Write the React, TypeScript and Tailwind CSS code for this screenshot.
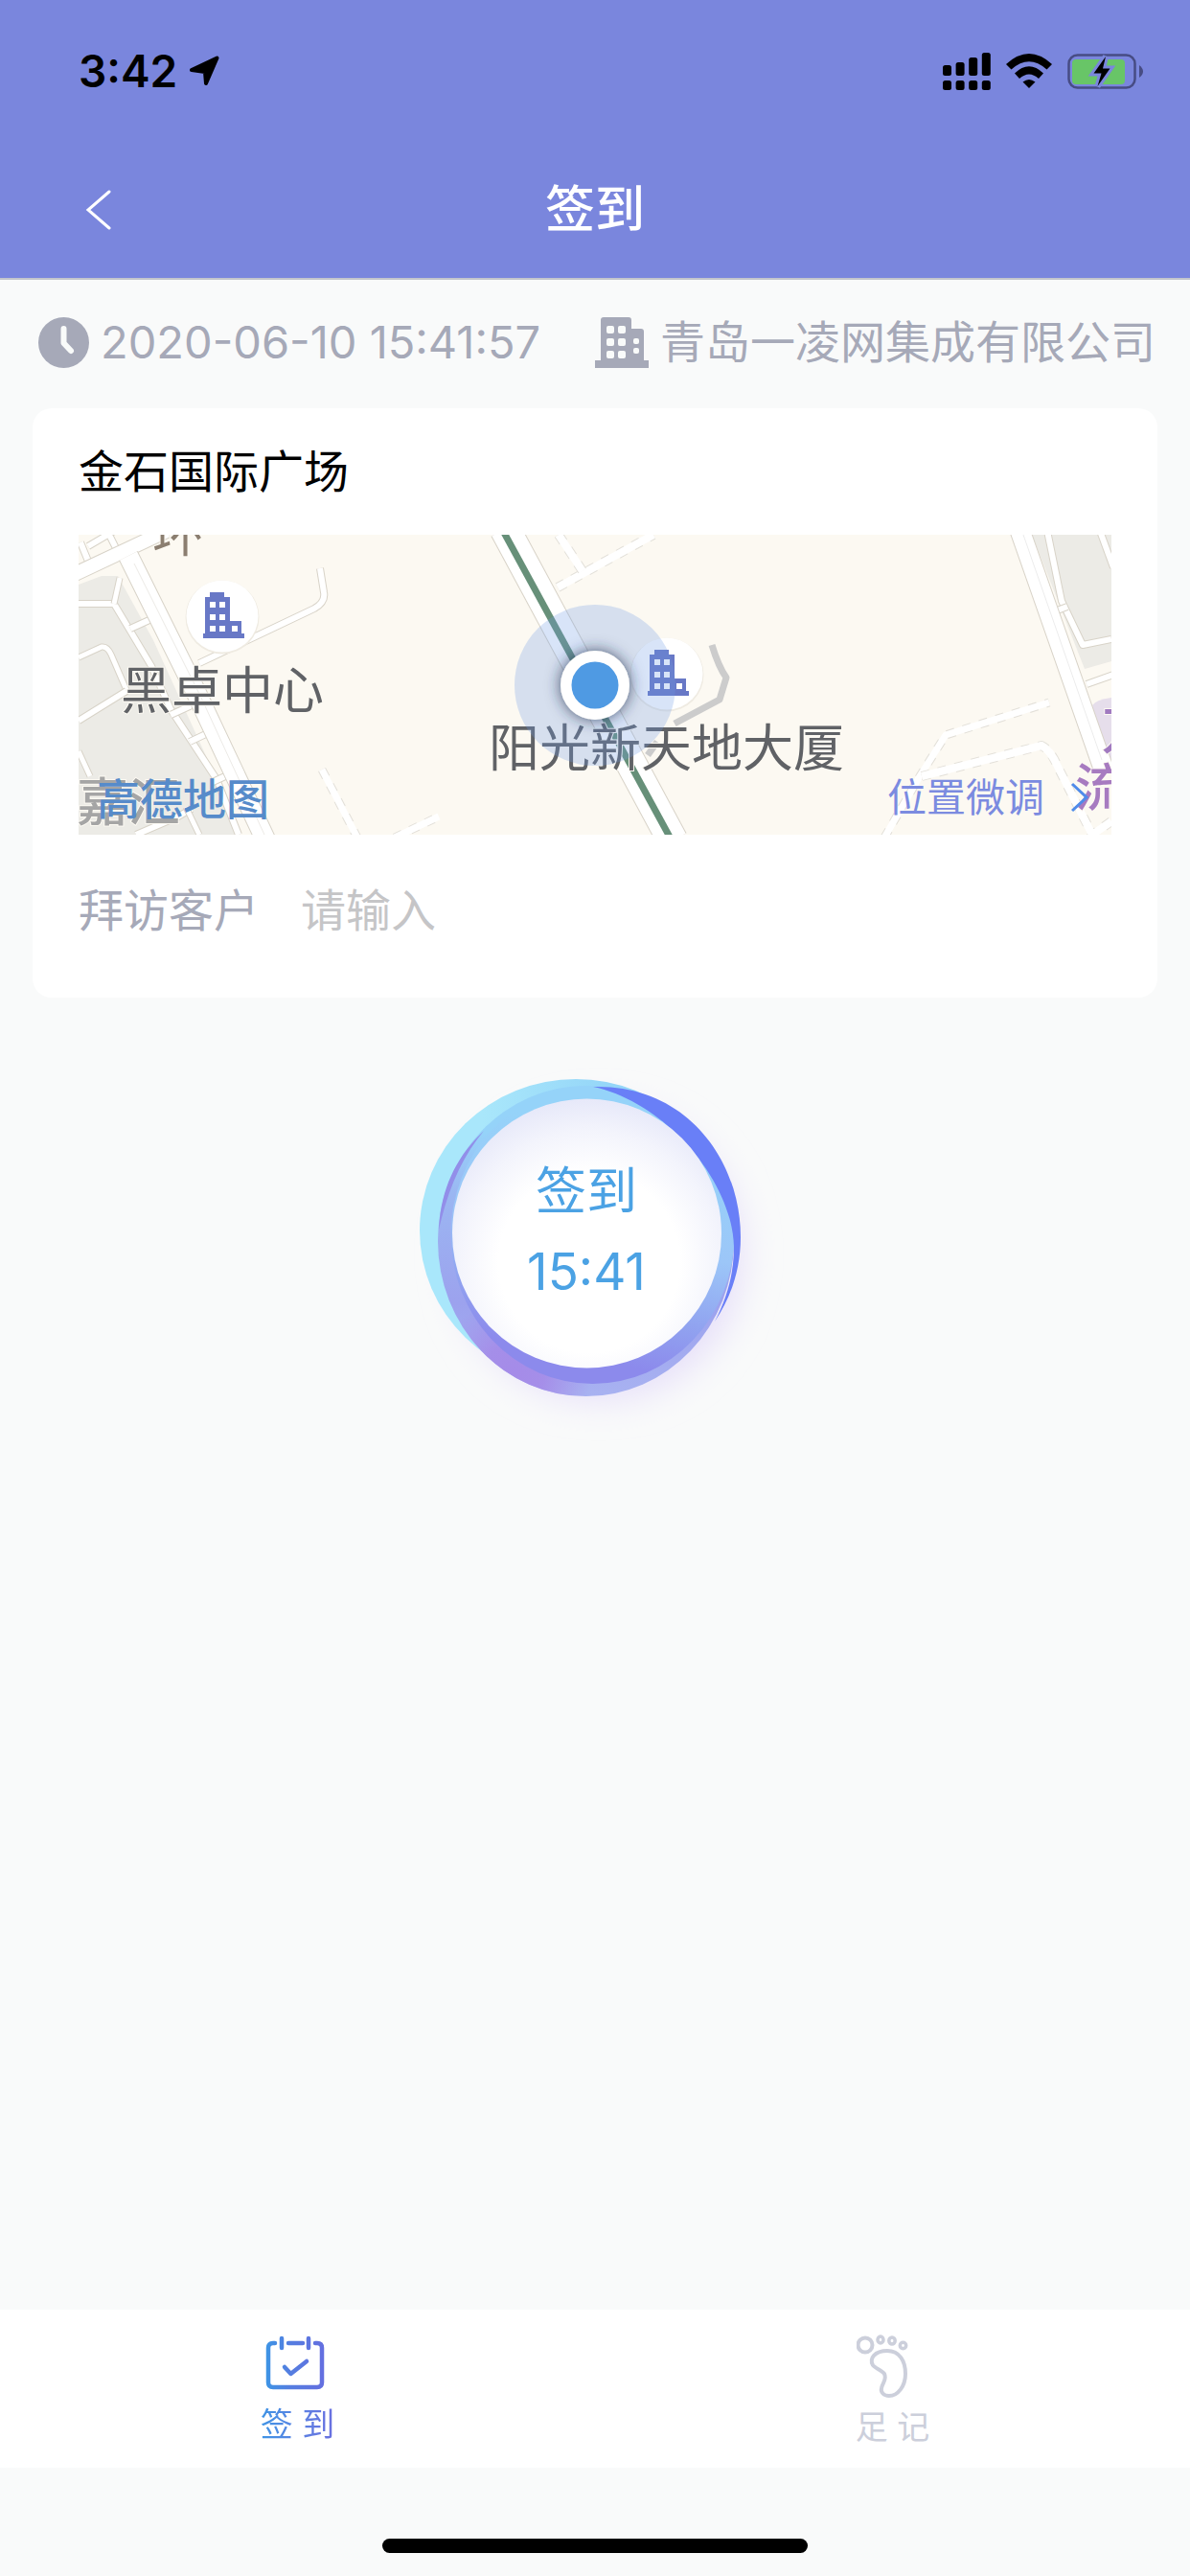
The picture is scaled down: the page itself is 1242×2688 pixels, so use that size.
import React, { useState } from 'react';

interface BuildingPinProps {
  x: number;
  y: number;
}

interface RoadProps {
  d: string;
  width: number;
  dashed?: boolean;
}

function LocationArrow() {
  return (
    <svg className="h-8 w-8" viewBox="0 0 32 32" aria-hidden="true">
      <path d="M29.5 2.5 18 29 17 17 3 15Z" fill="#000" stroke="#000" strokeWidth="4" strokeLinejoin="round" />
    </svg>
  );
}

function SignalIcon() {
  const tops = [13, 10, 5, 0];
  return (
    <svg className="h-[39px] w-[50px]" viewBox="0 0 50 39" aria-hidden="true">
      {tops.map((top, i) => (
        <g key={top}>
          <rect x={i * 13.6} y={top} width="9" height={24 - top} rx="2.5" />
          <rect x={i * 13.6} y="29" width="9" height="10" rx="2.5" />
        </g>
      ))}
    </svg>
  );
}

function WifiIcon() {
  return (
    <svg className="h-9 w-12" viewBox="0 0 48 36" aria-hidden="true">
      <path d="M0 11Q24-11 48 11L42.500 16.500Q24 0 5.500 16.500Z" />
      <path d="M9 20.500Q24 6 39 20.500L34 26Q24 17 14 26Z" />
      <path d="M17.500 29.500Q24 24.500 30.500 29.500L24 36Z" />
    </svg>
  );
}

function BatteryIcon() {
  return (
    <svg className="h-10 w-20" viewBox="0 0 80 40" aria-hidden="true">
      <rect x="1.500" y="3.500" width="69" height="34" rx="9" fill="none" stroke="#474c84" strokeWidth="2.500" />
      <path d="M75 14Q79 17 79 20.500T75 27Z" fill="#474c84" />
      <rect x="5" y="8" width="55" height="26" rx="4" fill="#68c567" />
      <path d="M40 5 27.500 22.500H35.500L31.500 36 44.500 17.500H37Z" stroke="#7a86dd" strokeWidth="6" />
      <path d="M40 5 27.500 22.500H35.500L31.500 36 44.500 17.500H37Z" />
    </svg>
  );
}

function ClockIcon() {
  return (
    <svg className="h-[53px] w-[53px] shrink-0" viewBox="0 0 53 53" aria-hidden="true">
      <circle cx="26.500" cy="26.500" r="26.500" fill="#a6a9b8" />
      <path d="M26.500 12V27L34 35" fill="none" stroke="#f9fbfa" strokeWidth="6" strokeLinecap="round" strokeLinejoin="round" />
    </svg>
  );
}

function CompanyIcon() {
  return (
    <svg className="h-[53px] w-14 shrink-0" viewBox="0 0 56 53" aria-hidden="true">
      <path d="M6 3Q6 0 9 0H35Q38 0 38 3V12H48Q51 12 51 15V45H56V53H0V45H6Z" fill="#a6a9b8" />
      <g fill="#f9fbfa">
        {[9, 22, 35].map((y) => (
          <React.Fragment key={y}>
            <rect x="12" y={y} width="8" height="8" rx="2" />
            <rect x="24" y={y} width="8" height="8" rx="2" />
          </React.Fragment>
        ))}
        <rect x="40" y="22" width="6" height="6" rx="2" />
        <rect x="40" y="32" width="6" height="6" rx="2" />
      </g>
    </svg>
  );
}

// Road with a thin casing on both sides
function Road({ d, width, dashed }: RoadProps) {
  return (
    <g fill="none" strokeLinejoin="round">
      <path d={d} stroke={dashed ? '#e3e0d9' : '#d8d3c8'} strokeWidth={width + 2} strokeDasharray={dashed ? '9 9' : undefined} />
      <path d={d} stroke="#fff" strokeWidth={width} />
    </g>
  );
}

function BuildingPin({ x, y }: BuildingPinProps) {
  return (
    <g transform={`translate(${x} ${y})`}>
      <circle r="38.500" fill="#efebe2" cy="1" />
      <circle r="37.500" fill="#fff" />
      <path d="M-18-20H-13V-25H2V-20H8V5H20V18H23V23H-20V18H-18Z" fill="#6878c6" />
      <g fill="#fff">
        {[-15, -2, 10].map((wy) => (
          <React.Fragment key={wy}>
            <rect x="-13" y={wy} width="6" height="6" />
            <rect x="-3" y={wy} width="6" height="6" />
          </React.Fragment>
        ))}
        <rect x="10" y="10" width="6" height="6" />
      </g>
    </g>
  );
}

function MapView() {
  return (
    <svg className="block h-full w-full" viewBox="0 0 1078 313" preserveAspectRatio="xMidYMid slice" role="img" aria-label="地图">
      <defs>
        <filter id="pin-shadow" x="-50%" y="-50%" width="200%" height="200%">
          <feDropShadow dx="0" dy="0" stdDeviation="8" floodColor="#23304f" floodOpacity="0.8" />
        </filter>
      </defs>
      <rect width="1078" height="313" fill="#fcf9f2" />

      {/* City blocks */}
      <path d="M0 52 24 43H41L78 110 144 255 168 313H0Z" fill="#ecebe6" />
      <path d="M995 0H1078V132L1050 140Z" fill="#ecebe6" />
      <path d="M1058 178Q1062 172 1078 170V245H1074Z" fill="#e6deeb" />

      {/* Left side streets */}
      <Road d="M0 72H37L76 137 96 182 144 255 167 313" width={6} />
      <Road d="M37 72 43 45" width={5} />
      <Road d="M54 98 76 88" width={6} />
      <Road d="M0 128 24 117Q30 116 34 125L50 162" width={5} />
      <Road d="M0 194 50 163" width={6} />
      <Road d="M96 188 120 177" width={6} />
      <Road d="M116 216 137 206" width={6} />
      <Road d="M140 258 164 247" width={6} />
      <Road d="M0 226 12 252" width={5} />
      <Road d="M60 313 104 294 118 286" width={6} />
      <Road d="M112 284 126 313" width={5} />
      <Road d="M11 30 2 8M10 12 44 -8M28-8 40 16" width={6} />
      <Road d="M126 134 246 77Q258 70 256 60L252 35" width={6} />
      <Road d="M-6 42 92-4" width={14} />
      <Road d="M52 22 122 163 196 320" width={20} />
      <path d="M58 30 128 170 194 313" fill="none" stroke="#eceae6" />

      {/* Footpaths */}
      <Road d="M254 245 292 318" width={7} dashed />
      <Road d="M330 316 376 294" width={7} dashed />
      <Road d="M500 55 600 0" width={8} dashed />
      <Road d="M501 0 526 38" width={8} dashed />
      <Road d="M841 316 878 252 905 209 1013 175" width={7} dashed />
      <Road d="M880 252 1005 220Q1014 224 1022 242L1058 313 1078 299" width={8} dashed />

      {/* Right side roads */}
      <Road d="M1011-4 1026 69 1048 115 1078 109" width={6} />
      <Road d="M1066-4 1080 34" width={6} />
      <Road d="M1016 81 1032 75" width={6} />
      <Road d="M1052 156 1080 146" width={6} />
      <Road d="M982-6 1070 245" width={20} />
      <path d="M986 0 1068 235" fill="none" stroke="#ececec" />

      {/* Main road with the metro line */}
      <Road d="M445-6 620 319" width={31} />
      <path d="M442-6 619 319" fill="none" stroke="#679079" strokeWidth="7" />

      <path d="M661 115Q668 138 676 149L669 172 622 197" fill="none" stroke="#ccc" strokeWidth="7" strokeLinejoin="round" />
      <path d="M604 216 594 230" fill="none" stroke="#ccc" strokeWidth="7" />

      <BuildingPin x={150} y={85} />
      <BuildingPin x={614} y={145} />

      <g fontFamily="Noto Sans CJK SC, sans-serif" stroke="#fcf9f2" strokeWidth="2" paintOrder="stroke">
        <text x="77" y="18" fontSize="54" fill="#8b7e70">环</text>
        <text x="44" y="182" fontSize="53" fill="#606266">黑卓中心</text>
        <text x="428" y="242" fontSize="53" fill="#606266">阳光新天地大厦</text>
        <text x="-2" y="299" fontSize="54" fontWeight="500" fill="#a5a5a5">嘉汇</text>
        <text x="1068" y="224" fontSize="54" fontWeight="500" fill="#a17ac0">万</text>
        <text x="1040" y="284" fontSize="54" fontWeight="500" fill="#a77bc0">流</text>
      </g>
      <text x="19" y="293" fontFamily="Noto Sans CJK SC, sans-serif" fontSize="45" fontWeight="500" fill="#568bca">高德地图</text>

      {/* Current position */}
      <circle cx="539" cy="157" r="84" fill="#6f9de5" fillOpacity="0.27" />
      <circle cx="539" cy="157" r="36" fill="#fff" filter="url(#pin-shadow)" />
      <circle cx="539" cy="157" r="24.500" fill="#4f9ae3" />
    </svg>
  );
}

function SignRing() {
  return (
    <svg className="block h-[420px] w-[440px]" viewBox="0 0 440 420" aria-hidden="true">
      <defs>
        <linearGradient id="ring-main" x1="0" y1="0" x2="0" y2="1">
          <stop offset="0.15" stopColor="#95d3f9" />
          <stop offset="0.35" stopColor="#9bb6f2" />
          <stop offset="0.7" stopColor="#9ca2ee" />
          <stop offset="1" stopColor="#a8b2f1" />
        </linearGradient>
        <radialGradient id="ring-purple" gradientUnits="userSpaceOnUse" cx="135" cy="345" r="80">
          <stop offset="0" stopColor="#a58be8" />
          <stop offset="0.4" stopColor="#a58be8" stopOpacity="0.9" />
          <stop offset="1" stopColor="#a58be8" stopOpacity="0" />
        </radialGradient>
        <linearGradient id="ring-inner" x1="0.6" y1="0" x2="0.4" y2="1">
          <stop offset="0.15" stopColor="#95d3f9" />
          <stop offset="0.5" stopColor="#9cc6f8" />
          <stop offset="0.72" stopColor="#91a4f0" />
          <stop offset="0.9" stopColor="#8c8aec" />
        </linearGradient>
        <linearGradient id="ring-cyan" x1="0" y1="0" x2="1" y2="0">
          <stop offset="0.2" stopColor="#a9e7fb" />
          <stop offset="0.6" stopColor="#95d6f8" />
        </linearGradient>
        <radialGradient id="disc" gradientUnits="userSpaceOnUse" cx="214" cy="228" r="172">
          <stop offset="0.55" stopColor="#fff" />
          <stop offset="0.8" stopColor="#f3f4fc" />
          <stop offset="1" stopColor="#e6e8f9" />
        </radialGradient>
        <filter id="ring-blur" x="-30%" y="-30%" width="160%" height="160%">
          <feGaussianBlur stdDeviation="18" />
        </filter>
      </defs>
      <ellipse cx="224" cy="220" rx="150" ry="152" fill="#e6dff9" filter="url(#ring-blur)" />
      <ellipse cx="200" cy="195" rx="163" ry="158" fill="url(#ring-cyan)" />
      <ellipse cx="210.500" cy="206" rx="154.500" ry="162" fill="url(#ring-main)" />
      <ellipse cx="210.500" cy="206" rx="154.500" ry="162" fill="url(#ring-purple)" />
      <ellipse cx="217.500" cy="199.500" rx="148" ry="155.500" fill="url(#ring-inner)" />
      <path d="M57 194C59 152 75 118 104 91C82 117 67 150 57 194Z" fill="#928ee9" />
      <path d="M218 45C315 42 372 121 372 202C372 235 362 265 345 290C358 265 365 240 365 212C363 140 290 60 218 45Z" fill="#697ff7" />
      <circle cx="211.500" cy="198" r="140.500" fill="url(#disc)" />
    </svg>
  );
}

function CalendarCheckIcon() {
  return (
    <svg className="h-[68px] w-[76px]" viewBox="3 0 76 68" aria-hidden="true">
      <defs>
        <linearGradient id="calendar" gradientUnits="userSpaceOnUse" x1="8" y1="30" x2="68" y2="30">
          <stop offset="0" stopColor="#3e94e5" />
          <stop offset="0.4" stopColor="#547ee0" />
          <stop offset="1" stopColor="#646fe0" />
        </linearGradient>
      </defs>
      <g fill="none" stroke="url(#calendar)" strokeWidth="4.500" strokeLinecap="round" strokeLinejoin="round">
        <path d="M17 8.900H15Q10 9 10 14V50Q10 55 15 55H61Q66 55 66 50V14Q66 9 61 9H59M31 9 46 9.010M24 4 24.010 14M52 4 52.010 14M27 34 33.500 41 50 28" />
      </g>
    </svg>
  );
}

function FootprintIcon() {
  return (
    <svg className="h-[68px] w-[76px]" viewBox="0 0 76 68" fill="none" stroke="#cccfdb" strokeWidth="4" aria-hidden="true">
      <circle cx="9" cy="11" r="7.500" />
      <ellipse cx="25" cy="5.500" rx="3" ry="3.500" strokeWidth="3.500" />
      <ellipse cx="37" cy="6.500" rx="3.200" ry="3.500" strokeWidth="3.500" />
      <circle cx="48.500" cy="11.500" r="3.200" strokeWidth="3.500" />
      <path d="M17 32C13 25 19 17 32 17C45 17 51 28 51 41C51 54 43 64 34 64C28 64 25 60 26 56C27 50 32 47 29 41C26 37 19 35 17 32Z" />
    </svg>
  );
}

export default function App() {
  const [customer, setCustomer] = useState('');

  return (
    <div className="flex min-h-screen flex-col bg-[#f9fafa] font-['Inter','Noto_Sans_CJK_SC',sans-serif]">
      <header className="border-b-2 border-[#c3c5cc] bg-[#7a86dd]">
        <div className="flex h-[148px] items-center justify-between pr-12 pl-[82px]">
          <div className="flex items-center gap-3 text-[46px] font-semibold text-black">
            <time>3:42</time>
            <LocationArrow />
          </div>
          <div className="flex items-center gap-4">
            <SignalIcon />
            <WifiIcon />
            <BatteryIcon />
          </div>
        </div>
        <div className="grid h-[142px] grid-cols-3 items-center">
          <button type="button" aria-label="返回" className="ml-[88px] flex h-16 w-8 items-center">
            <svg className="h-11 w-7" viewBox="0 0 28 44" fill="none" stroke="#fff" strokeWidth="3" strokeLinecap="round">
              <path d="M26 3 4 22 26 41" />
            </svg>
          </button>
          <h1 className="text-center text-[52px] font-medium text-white">签到</h1>
        </div>
      </header>

      <main className="flex-1">
        <div className="flex h-[134px] items-center justify-between pr-9 pb-1 pl-10 text-[47px] text-[#a6a9b8]">
          <div className="flex items-center gap-3">
            <ClockIcon />
            <time className="whitespace-nowrap">2020-06-10 15:41:57</time>
          </div>
          <div className="flex items-center gap-3">
            <CompanyIcon />
            <span className="whitespace-nowrap">青岛一凌网集成有限公司</span>
          </div>
        </div>

        <section className="mx-[34px] rounded-[20px] bg-white px-12">
          <h2 className="flex h-[132px] items-center text-[47px] text-black">金石国际广场</h2>
          <div className="relative h-[313px] overflow-hidden">
            <MapView />
            <button type="button" className="absolute right-6 bottom-2 flex items-center gap-7 text-[41px] text-[#7b8be0]">
              位置微调
              <svg className="h-8 w-[18px]" viewBox="0 0 18 32" fill="none" stroke="#4f8bea" strokeWidth="3">
                <path d="M1 2 16 16 1 30" />
              </svg>
            </button>
          </div>
          <div className="flex h-[170px] items-center gap-11 pb-3 text-[47px]">
            <label htmlFor="customer" className="text-[#a6a9b8]">拜访客户</label>
            <input
              id="customer"
              type="text"
              value={customer}
              onChange={(e) => setCustomer(e.target.value)}
              placeholder="请输入"
              className="min-w-0 flex-1 bg-transparent text-black outline-none placeholder:text-[#c5c5c7]"
            />
          </div>
        </section>

        <div className="flex justify-center pt-12">
          <button type="button" className="relative text-[#4ba2e4]">
            <SignRing />
            <span className="absolute inset-0 flex flex-col items-center pt-28 pr-[18px] text-[53px] leading-[84px]">
              <span>签到</span>
              <time>15:41</time>
            </span>
          </button>
        </div>
      </main>

      <nav className="grid h-[165px] grid-cols-2 bg-white text-[34px]">
        <button type="button" className="flex flex-col items-center pt-[26px]">
          <CalendarCheckIcon />
          <span className="bg-linear-to-r from-[#3e94e5] to-[#6a70e0] bg-clip-text leading-[52px] text-transparent">签 到</span>
        </button>
        <button type="button" className="flex flex-col items-center pt-[26px] text-[#cccfdb]">
          <FootprintIcon />
          <span className="leading-[58px]">足 记</span>
        </button>
      </nav>
      <footer className="flex h-[113px] items-end justify-center pb-6">
        <div className="h-[15px] w-[444px] rounded-full bg-black" />
      </footer>
    </div>
  );
}
